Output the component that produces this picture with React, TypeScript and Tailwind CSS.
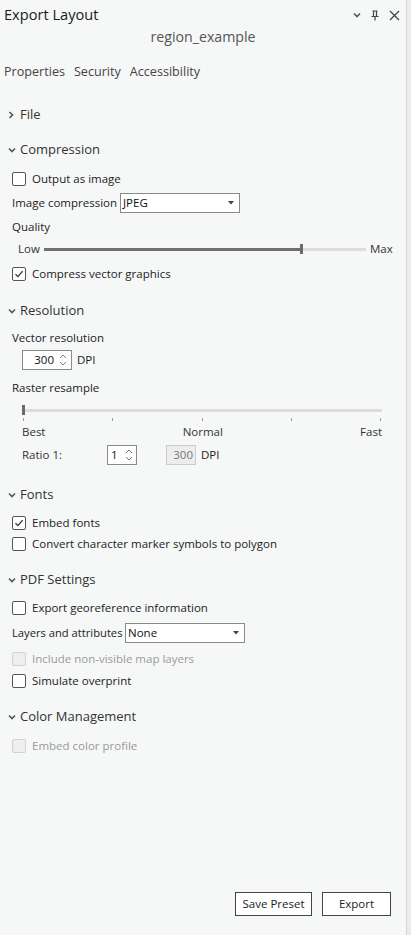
import type { ReactNode } from 'react';

const font = { fontFamily: '"Segoe UI", "Open Sans", "Noto Sans", sans-serif' };

function ChevronDown({ className = '' }: { className?: string }) {
  return (
    <svg width="8" height="6" viewBox="0 0 8 6" className={className}>
      <path d="M1 1.5 L4 4.5 L7 1.5" fill="none" stroke="#555" strokeWidth="1.6" />
    </svg>
  );
}

function ChevronRight() {
  return (
    <svg width="6" height="8" viewBox="0 0 6 8">
      <path d="M1.5 1 L4.5 4 L1.5 7" fill="none" stroke="#555" strokeWidth="1.6" />
    </svg>
  );
}

function Section({ title, open = true, className }: { title: string; open?: boolean; className: string }) {
  return (
    <div className={`flex items-center h-5 pt-[2px] pl-[8px] ${className}`}>
      <span className="w-[12px] flex items-center">{open ? <ChevronDown /> : <ChevronRight />}</span>
      <span className="text-[13px] text-[#333]">{title}</span>
    </div>
  );
}

function Check({
  label,
  checked = false,
  disabled = false,
  className,
}: {
  label: string;
  checked?: boolean;
  disabled?: boolean;
  className: string;
}) {
  return (
    <div className={`flex items-center h-5 pl-[12px] ${className}`}>
      <span
        className={`w-[14px] h-[14px] rounded-[2px] border flex items-center justify-center ${
          disabled ? 'border-[#d2d2d2] bg-[#eeeeee]' : 'border-[#555] bg-white'
        }`}
      >
        {checked && (
          <svg width="10" height="10" viewBox="0 0 10 10">
            <path d="M1.5 5.2 L4 7.6 L8.6 2.2" fill="none" stroke="#333" strokeWidth="1.3" />
          </svg>
        )}
      </span>
      <span className={`ml-[6px] text-[11.5px] ${disabled ? 'text-[#9a9a9a]' : 'text-[#222]'}`}>{label}</span>
    </div>
  );
}

function Select({ value, width }: { value: string; width: string }) {
  return (
    <div className={`${width} h-5 bg-white border border-[#8a8a8a] flex items-center justify-between pl-[2px] pr-[5px]`}>
      <span className="text-[11.5px] text-[#111]">{value}</span>
      <svg width="6" height="4" viewBox="0 0 6 4">
        <path d="M0 0 H6 L3 3.5 Z" fill="#444" />
      </svg>
    </div>
  );
}

function Spinner() {
  return (
    <svg width="8" height="14" viewBox="0 0 8 14">
      <path d="M1 5 L4 2 L7 5" fill="none" stroke="#777" strokeWidth="1" />
      <path d="M1 9 L4 12 L7 9" fill="none" stroke="#777" strokeWidth="1" />
    </svg>
  );
}

function Row({ className, children }: { className: string; children: ReactNode }) {
  return <div className={`flex items-center ${className}`}>{children}</div>;
}

export default function App() {
  return (
    <div style={font} className="w-[411px] h-[935px] bg-[#ebebeb] flex">
      <div className="w-[407px] h-full bg-[#f6f7f7] border-r border-[#d4d4d4] flex flex-col">
        {/* Header */}
        <div className="flex items-center justify-between h-[30px] pl-[4px] pr-[6px]">
          <span className="text-[14.6px] text-[#1a1a1a]">Export Layout</span>
          <div className="flex items-center">
            <ChevronDown />
            <svg width="8" height="11" viewBox="0 0 8 11" className="ml-[10px]">
              <path d="M1.5 1 H6.5 M2.5 1 V6 M5.5 1 V6 M0.5 6.5 H7.5 M4 6.5 V10.5" fill="none" stroke="#444" strokeWidth="1.2" />
            </svg>
            <svg width="11" height="11" viewBox="0 0 11 11" className="ml-[10px]">
              <path d="M1 1 L10 10 M10 1 L1 10" stroke="#444" strokeWidth="1.3" />
            </svg>
          </div>
        </div>
        <div className="h-[14px] flex items-center justify-center">
          <span className="text-[14.2px] text-[#555]">region_example</span>
        </div>

        {/* Tabs */}
        <Row className="h-5 mt-[17px] pt-[2px] pl-[4px] gap-[9px] text-[12.6px] text-[#444]">
          <span>Properties</span>
          <span>Security</span>
          <span>Accessibility</span>
        </Row>

        <Section title="File" open={false} className="mt-[23px]" />

        <Section title="Compression" className="mt-[15px]" />
        <Check label="Output as image" className="mt-[10px]" />
        <Row className="h-5 mt-[4px] pl-[12px]">
          <span className="text-[11.5px] text-[#222] w-[108px] whitespace-nowrap">Image compression</span>
          <Select value="JPEG" width="w-[120px]" />
        </Row>
        <Row className="h-5 mt-[4px] pl-[12px]">
          <span className="text-[11.5px] text-[#222]">Quality</span>
        </Row>
        <Row className="h-5 mt-[2px] pl-[18px]">
          <span className="text-[11.5px] text-[#333] w-[26px]">Low</span>
          <div className="relative w-[322px] h-[10px] flex items-center">
            <div className="w-[256px] h-[3px] bg-[#707070]" />
            <div className="flex-1 h-[3px] bg-[#dcdcdc]" />
            <div className="absolute left-[256px] top-0 w-[3px] h-[10px] bg-[#6a6a6a]" />
          </div>
          <span className="text-[11.5px] text-[#333] ml-[4px]">Max</span>
        </Row>
        <Check label="Compress vector graphics" checked className="mt-[5px]" />

        <Section title="Resolution" className="mt-[16px]" />
        <Row className="h-5 mt-[8px] pl-[12px]">
          <span className="text-[11.5px] text-[#222]">Vector resolution</span>
        </Row>
        <Row className="h-5 mt-[2px] pl-[22px]">
          <div className="w-[50px] h-5 bg-white border border-[#8a8a8a] flex items-center justify-end pr-[4px] gap-[5px]">
            <span className="text-[11.5px] text-[#111]">300</span>
            <Spinner />
          </div>
          <span className="text-[11.5px] text-[#222] ml-[5px]">DPI</span>
        </Row>
        <Row className="h-5 mt-[8px] pl-[12px]">
          <span className="text-[11.5px] text-[#222]">Raster resample</span>
        </Row>
        <div className="h-4 mt-[4px] pl-[22px] pr-[24px] flex items-center relative">
          <div className="w-full h-[3px] bg-[#dcdcdc]" />
          <div className="absolute left-[22px] top-[3px] w-[3px] h-[10px] bg-[#6a6a6a]" />
        </div>
        <div className="h-[6px] pl-[23px] pr-[25px] flex justify-between items-start">
          {[0, 1, 2, 3, 4].map((i) => (
            <div key={i} className="w-[1px] h-[3px] bg-[#999]" />
          ))}
        </div>
        <div className="h-4 pl-[22px] pr-[24px] flex items-center justify-between text-[11.5px] text-[#333]">
          <span>Best</span>
          <span>Normal</span>
          <span>Fast</span>
        </div>
        <Row className="h-5 mt-[5px] pl-[22px]">
          <span className="text-[11.5px] text-[#333] w-[85px]">Ratio 1:</span>
          <div className="w-[30px] h-5 bg-white border border-[#8a8a8a] flex items-center justify-between pl-[3px] pr-[3px]">
            <span className="text-[11.5px] text-[#111]">1</span>
            <Spinner />
          </div>
          <div className="ml-[29px] w-[30px] h-5 bg-[#ededed] border border-[#cccccc] flex items-center justify-end pr-[2px]">
            <span className="text-[11.5px] text-[#777]">300</span>
          </div>
          <span className="text-[11.5px] text-[#222] ml-[5px]">DPI</span>
        </Row>

        <Section title="Fonts" className="mt-[19px]" />
        <Check label="Embed fonts" checked className="mt-[9px]" />
        <Check label="Convert character marker symbols to polygon" className="mt-[1px]" />

        <Section title="PDF Settings" className="mt-[15px]" />
        <Check label="Export georeference information" className="mt-[9px]" />
        <Row className="h-5 mt-[5px] pl-[12px]">
          <span className="text-[11.2px] text-[#222] w-[113px] whitespace-nowrap">Layers and attributes</span>
          <Select value="None" width="w-[120px]" />
        </Row>
        <Check label="Include non-visible map layers" disabled className="mt-[6px]" />
        <Check label="Simulate overprint" className="mt-[2px]" />

        <Section title="Color Management" className="mt-[15px]" />
        <Check label="Embed color profile" disabled className="mt-[10px]" />

        {/* Footer */}
        <div className="mt-auto mb-[19px] flex justify-end gap-[10px] pr-[15px]">
          <button className="w-[77px] h-[24px] border border-[#444] bg-white text-[11.5px] text-[#222]">
            Save Preset
          </button>
          <button className="w-[69px] h-[24px] border border-[#444] bg-white text-[11.5px] text-[#222]">
            Export
          </button>
        </div>
      </div>
    </div>
  );
}
